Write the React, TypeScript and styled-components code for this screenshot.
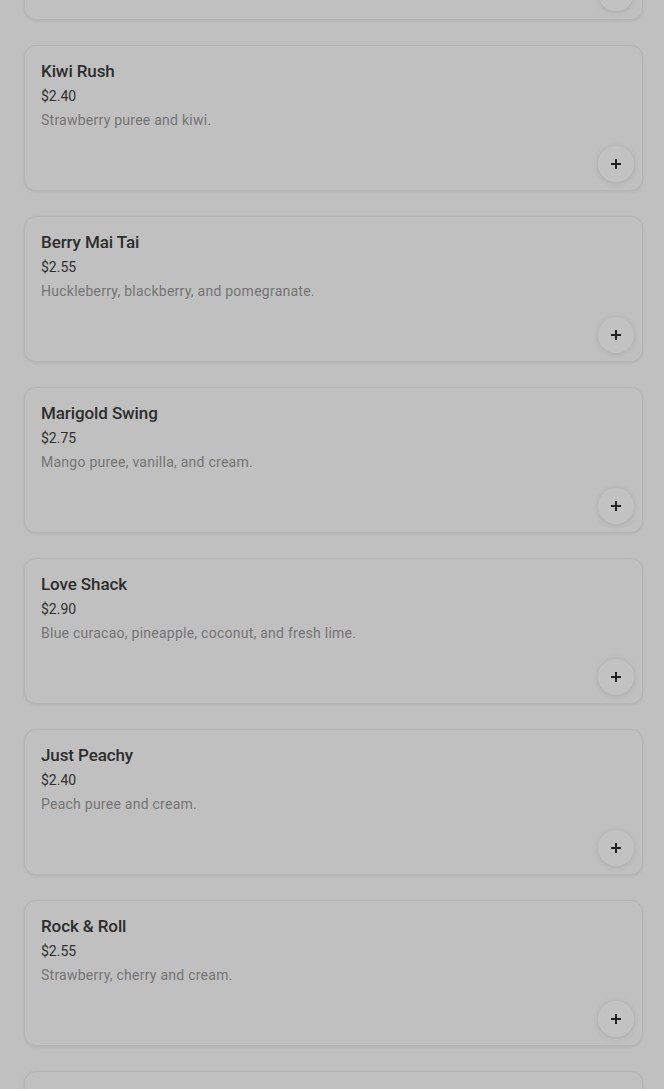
import React from "react";
import styled, { createGlobalStyle } from "styled-components";

const Global = createGlobalStyle`
  html, body { margin: 0; padding: 0; background: #c0c0c0; }
  body { font-family: Roboto, "Noto Sans", sans-serif; overflow: hidden; }
`;

const List = styled.div`
  display: flex;
  flex-direction: column;
  gap: 25px;
  padding: 0 21px 0 24px;
  margin-top: -126px;
`;

const Card = styled.div`
  position: relative;
  height: 146px;
  box-sizing: border-box;
  border: 1px solid #b4b4b4;
  border-radius: 12px;
  background: #c0c0c0;
  box-shadow: 0 1px 3px rgba(0, 0, 0, 0.08);
  padding: 14px 16px;
  display: flex;
  flex-direction: column;
`;

const Title = styled.div`
  font-size: 17px;
  font-weight: 500;
  color: #2d2d2d;
  line-height: 22px;
  letter-spacing: -0.1px;
`;

const Price = styled.div`
  margin-top: 4px;
  font-size: 14px;
  color: #303030;
  line-height: 20px;
`;

const Desc = styled.div`
  margin-top: 4px;
  font-size: 14px;
  color: #747474;
  line-height: 20px;
  letter-spacing: 0.25px;
`;

const AddButton = styled.button`
  position: absolute;
  right: 8px;
  bottom: 8px;
  width: 36px;
  height: 36px;
  border-radius: 50%;
  border: none;
  background: #c2c2c2;
  box-shadow: 0 1px 6px rgba(0, 0, 0, 0.12);
  display: flex;
  align-items: center;
  justify-content: center;
  padding: 0;
`;

const items = [
  { name: "Mango Tango", price: "$2.40", desc: "Mango puree and cream." },
  { name: "Kiwi Rush", price: "$2.40", desc: "Strawberry puree and kiwi." },
  { name: "Berry Mai Tai", price: "$2.55", desc: "Huckleberry, blackberry, and pomegranate." },
  { name: "Marigold Swing", price: "$2.75", desc: "Mango puree, vanilla, and cream." },
  { name: "Love Shack", price: "$2.90", desc: "Blue curacao, pineapple, coconut, and fresh lime." },
  { name: "Just Peachy", price: "$2.40", desc: "Peach puree and cream." },
  { name: "Rock & Roll", price: "$2.55", desc: "Strawberry, cherry and cream." },
  { name: "Root Beer", price: "$2.40", desc: "Root beer and vanilla cream." },
];

const Plus = () => (
  <svg width="12" height="12" viewBox="0 0 12 12">
    <path d="M6 1v10M1 6h10" stroke="#1f1f1f" strokeWidth="2" />
  </svg>
);

export default function App() {
  return (
    <>
      <Global />
      <List>
        {items.map((it) => (
          <Card key={it.name}>
            <Title>{it.name}</Title>
            <Price>{it.price}</Price>
            <Desc>{it.desc}</Desc>
            <AddButton aria-label="Add">
              <Plus />
            </AddButton>
          </Card>
        ))}
      </List>
    </>
  );
}
